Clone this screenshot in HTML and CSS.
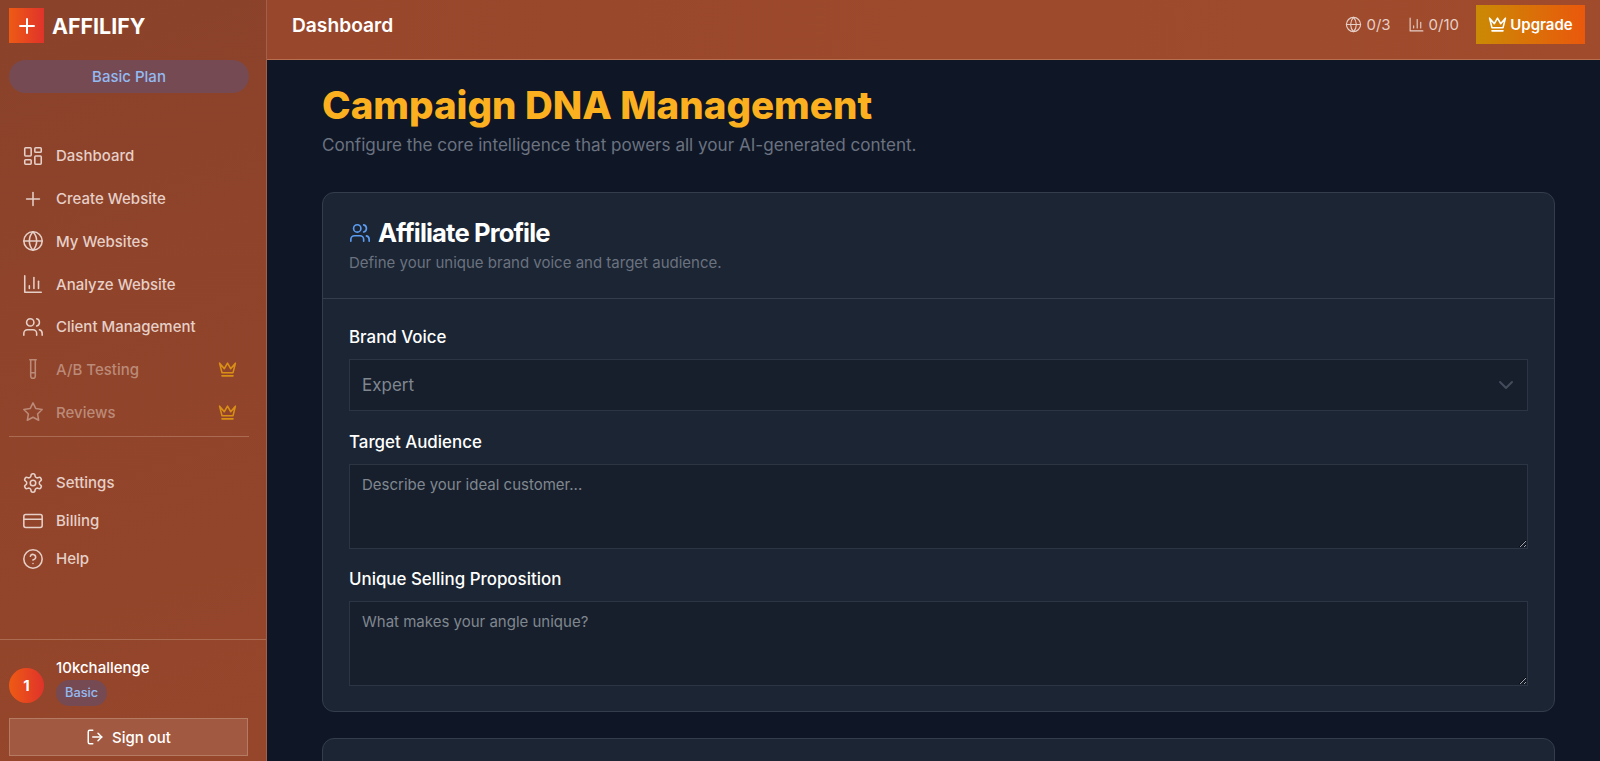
FILE: index.html
```html
<!DOCTYPE html>
<html lang="en">
<head>
    <meta charset="UTF-8">
    <meta name="viewport" content="width=device-width, initial-scale=1.0">
    <title>Affilify - Campaign DNA</title>
    <link rel="stylesheet" href="styles.css">
</head>
<body>
    <svg class="icon-defs" aria-hidden="true">
        <symbol id="i-dashboard" viewBox="0 0 24 24"><rect x="3" y="3" width="7" height="9" rx="1"/><rect x="14" y="3" width="7" height="5" rx="1"/><rect x="14" y="12" width="7" height="9" rx="1"/><rect x="3" y="16" width="7" height="5" rx="1"/></symbol>
        <symbol id="i-plus" viewBox="0 0 24 24"><path d="M5 12h14"/><path d="M12 5v14"/></symbol>
        <symbol id="i-globe" viewBox="0 0 24 24"><circle cx="12" cy="12" r="10"/><path d="M12 2a14.5 14.5 0 0 0 0 20 14.5 14.5 0 0 0 0-20"/><path d="M2 12h20"/></symbol>
        <symbol id="i-chart" viewBox="0 0 24 24"><path d="M3 3v18h18"/><path d="M18 17V9"/><path d="M13 17V5"/><path d="M8 17v-3"/></symbol>
        <symbol id="i-users" viewBox="0 0 24 24"><path d="M16 21v-2a4 4 0 0 0-4-4H6a4 4 0 0 0-4 4v2"/><circle cx="9" cy="7" r="4"/><path d="M22 21v-2a4 4 0 0 0-3-3.87"/><path d="M16 3.13a4 4 0 0 1 0 7.75"/></symbol>
        <symbol id="i-tube" viewBox="0 0 24 24"><path d="M14.5 2v17.5c0 1.4-1.1 2.5-2.5 2.5s-2.5-1.1-2.5-2.5V2"/><path d="M8.5 2h7"/><path d="M14.5 16h-5"/></symbol>
        <symbol id="i-star" viewBox="0 0 24 24"><polygon points="12 2 15.09 8.26 22 9.27 17 14.14 18.18 21.02 12 17.77 5.82 21.02 7 14.14 2 9.27 8.91 8.26 12 2"/></symbol>
        <symbol id="i-crown" viewBox="0 0 24 24"><path d="m2 4 3 12h14l3-12-6 7-4-7-4 7-6-7z"/><path d="M5 20h14"/></symbol>
        <symbol id="i-settings" viewBox="0 0 24 24"><path d="M12.22 2h-.44a2 2 0 0 0-2 2v.18a2 2 0 0 1-1 1.73l-.43.25a2 2 0 0 1-2 0l-.15-.08a2 2 0 0 0-2.73.73l-.22.38a2 2 0 0 0 .73 2.73l.15.1a2 2 0 0 1 1 1.72v.51a2 2 0 0 1-1 1.74l-.15.09a2 2 0 0 0-.73 2.73l.22.38a2 2 0 0 0 2.73.73l.15-.08a2 2 0 0 1 2 0l.43.25a2 2 0 0 1 1 1.73V20a2 2 0 0 0 2 2h.44a2 2 0 0 0 2-2v-.18a2 2 0 0 1 1-1.73l.43-.25a2 2 0 0 1 2 0l.15.08a2 2 0 0 0 2.73-.73l.22-.39a2 2 0 0 0-.73-2.73l-.15-.08a2 2 0 0 1-1-1.74v-.5a2 2 0 0 1 1-1.74l.15-.09a2 2 0 0 0 .73-2.73l-.22-.38a2 2 0 0 0-2.73-.73l-.15.08a2 2 0 0 1-2 0l-.43-.25a2 2 0 0 1-1-1.73V4a2 2 0 0 0-2-2z"/><circle cx="12" cy="12" r="3"/></symbol>
        <symbol id="i-card" viewBox="0 0 24 24"><rect x="2" y="5" width="20" height="14" rx="2"/><path d="M2 10h20"/></symbol>
        <symbol id="i-help" viewBox="0 0 24 24"><circle cx="12" cy="12" r="10"/><path d="M9.09 9a3 3 0 0 1 5.83 1c0 2-3 3-3 3"/><path d="M12 17h.01"/></symbol>
        <symbol id="i-logout" viewBox="0 0 24 24"><path d="M9 21H5a2 2 0 0 1-2-2V5a2 2 0 0 1 2-2h4"/><path d="m16 17 5-5-5-5"/><path d="M21 12H9"/></symbol>
        <symbol id="i-chevron" viewBox="0 0 24 24"><path d="m6 9 6 6 6-6"/></symbol>
    </svg>

    <aside class="sidebar">
        <div class="brand">
            <div class="brand-logo"><svg class="icon"><use href="#i-plus"/></svg></div>
            <span class="brand-name">AFFILIFY</span>
        </div>
        <div class="plan-pill">Basic Plan</div>

        <nav class="nav-main">
            <a class="nav-item"><svg class="icon"><use href="#i-dashboard"/></svg>Dashboard</a>
            <a class="nav-item"><svg class="icon"><use href="#i-plus"/></svg>Create Website</a>
            <a class="nav-item"><svg class="icon"><use href="#i-globe"/></svg>My Websites</a>
            <a class="nav-item"><svg class="icon"><use href="#i-chart"/></svg>Analyze Website</a>
            <a class="nav-item"><svg class="icon"><use href="#i-users"/></svg>Client Management</a>
            <a class="nav-item locked"><svg class="icon"><use href="#i-tube"/></svg>A/B Testing<svg class="icon crown"><use href="#i-crown"/></svg></a>
            <a class="nav-item locked"><svg class="icon"><use href="#i-star"/></svg>Reviews<svg class="icon crown"><use href="#i-crown"/></svg></a>
        </nav>

        <nav class="nav-secondary">
            <a class="nav-item"><svg class="icon"><use href="#i-settings"/></svg>Settings</a>
            <a class="nav-item"><svg class="icon"><use href="#i-card"/></svg>Billing</a>
            <a class="nav-item"><svg class="icon"><use href="#i-help"/></svg>Help</a>
        </nav>

        <div class="user-box">
            <div class="user-row">
                <div class="avatar">1</div>
                <div class="user-info">
                    <div class="user-name">10kchallenge</div>
                    <span class="user-badge">Basic</span>
                </div>
            </div>
            <button class="signout"><svg class="icon"><use href="#i-logout"/></svg>Sign out</button>
        </div>
    </aside>

    <div class="page">
        <header class="topbar">
            <div class="topbar-title">Dashboard</div>
            <div class="topbar-right">
                <span class="stat"><svg class="icon"><use href="#i-globe"/></svg>0/3</span>
                <span class="stat"><svg class="icon"><use href="#i-chart"/></svg>0/10</span>
                <button class="upgrade"><svg class="icon"><use href="#i-crown"/></svg>Upgrade</button>
            </div>
        </header>

        <main class="content">
            <h1>Campaign DNA Management</h1>
            <p class="lead">Configure the core intelligence that powers all your AI-generated content.</p>

            <section class="card">
                <div class="card-head">
                    <h2><svg class="icon"><use href="#i-users"/></svg>Affiliate Profile</h2>
                    <p>Define your unique brand voice and target audience.</p>
                </div>
                <div class="card-body">
                    <label class="field-label">Brand Voice</label>
                    <div class="select-wrap">
                        <select class="field field-select"><option>Expert</option></select>
                        <svg class="icon chevron"><use href="#i-chevron"/></svg>
                    </div>
                    <label class="field-label">Target Audience</label>
                    <textarea class="field field-area" placeholder="Describe your ideal customer..."></textarea>
                    <label class="field-label">Unique Selling Proposition</label>
                    <textarea class="field field-area" placeholder="What makes your angle unique?"></textarea>
                </div>
            </section>

            <section class="card card-next"></section>
        </main>
    </div>
</body>
</html>
```

FILE: styles.css
```css
* {
    box-sizing: border-box;
}

html, body {
    height: 100%;
}

body {
    display: flex;
    margin: 0;
    overflow: hidden;
    background-color: #0f1726;
    font-family: Inter, "Liberation Sans", sans-serif;
    color: #fff;
}

.icon-defs {
    display: none;
}

.icon {
    width: 24px;
    height: 24px;
    flex-shrink: 0;
    fill: none;
    stroke: currentColor;
    stroke-width: 2;
    stroke-linecap: round;
    stroke-linejoin: round;
}

/* sidebar */
.sidebar {
    display: flex;
    flex-direction: column;
    width: 267px;
    height: 761px;
    flex-shrink: 0;
    background: linear-gradient(160deg, #8a422a 0%, #96462b 100%);
    border-right: 1px solid #a2604a;
}

.brand {
    display: flex;
    align-items: center;
    gap: 8px;
    height: 35px;
    margin: 8px 9px 0;
}

.brand-logo {
    display: flex;
    align-items: center;
    justify-content: center;
    width: 35px;
    height: 35px;
    background: linear-gradient(90deg, #ee5a14, #e0332b);
}

.brand-name {
    font-size: 21.4px;
    font-weight: 700;
}

.plan-pill {
    height: 33px;
    margin: 17px 17px 0 9px;
    border-radius: 17px;
    background-color: #764a52;
    color: #93bbf3;
    font-size: 15px;
    font-weight: 500;
    line-height: 33px;
    text-align: center;
}

.nav-main {
    margin: 41.6px 17px 0 9px;
    padding-bottom: 2.5px;
    border-bottom: 1px solid #ab6a52;
}

.nav-item {
    display: flex;
    align-items: center;
    gap: 12px;
    height: 42.7px;
    padding-left: 13px;
    color: #e6cfc7;
    font-size: 15px;
    font-weight: 550;
}

.nav-item .icon {
    width: 22px;
    height: 22px;
    stroke-width: 1.7;
}

.nav-item.locked {
    color: #bb8a78;
}

.nav-item .crown {
    width: 19px;
    height: 19px;
    margin-left: auto;
    margin-right: 12px;
    color: #d98f16;
    stroke-width: 2;
}

.nav-secondary {
    margin: 27px 17px 0 9px;
}

.nav-secondary .nav-item {
    height: 38px;
}

.user-box {
    margin-top: auto;
    padding: 24px 18px 5px 9px;
    border-top: 1px solid #ab6a52;
}

.user-row {
    display: flex;
    align-items: center;
    gap: 12px;
}

.avatar {
    display: flex;
    align-items: center;
    justify-content: center;
    width: 35px;
    height: 35px;
    border-radius: 50%;
    background: linear-gradient(90deg, #ee5a14, #e0332b);
    font-size: 15px;
    font-weight: 700;
}

.user-info {
    margin-top: -6px;
}

.user-name {
    font-size: 15px;
    font-weight: 500;
    line-height: 20px;
}

.user-badge {
    display: inline-block;
    height: 26px;
    margin-top: 2px;
    padding: 0 9px;
    border-radius: 13px;
    background-color: #764a52;
    color: #93bbf3;
    font-size: 12.8px;
    font-weight: 500;
    line-height: 26px;
}

.signout {
    display: flex;
    align-items: center;
    justify-content: center;
    gap: 8px;
    width: 239px;
    height: 38px;
    margin-top: 12px;
    border: 1px solid #b67b63;
    background-color: #a15a41;
    color: #fff;
    font-family: inherit;
    font-size: 15px;
    font-weight: 550;
}

.signout .icon {
    width: 18px;
    height: 18px;
}

/* top bar */
.page {
    flex: 1;
    min-width: 0;
    height: 761px;
}

.topbar {
    display: flex;
    align-items: center;
    justify-content: space-between;
    height: 60px;
    padding: 0 15px 10px 25px;
    background: linear-gradient(100deg, #98472c 0%, #a04b2c 100%);
    border-bottom: 1px solid #b86f50;
}

.topbar-title {
    font-size: 19.2px;
    font-weight: 600;
}

.topbar-right {
    display: flex;
    align-items: center;
}

.stat {
    display: flex;
    align-items: center;
    gap: 4px;
    margin-right: 17px;
    color: #e6cfc7;
    font-size: 15px;
}

.stat .icon {
    width: 17px;
    height: 17px;
    stroke-width: 1.6;
}

.upgrade {
    display: flex;
    align-items: center;
    justify-content: center;
    gap: 3px;
    width: 109px;
    height: 39px;
    border: none;
    background: linear-gradient(90deg, #ca8a04, #ea580c);
    color: #fff;
    font-family: inherit;
    font-size: 15px;
    font-weight: 600;
}

.upgrade .icon {
    width: 19px;
    height: 19px;
}

/* main content */
.content {
    padding: 22px 45px 0 55px;
}

h1 {
    margin: 0;
    color: #fbb01f;
    font-size: 38.5px;
    font-weight: 800;
    line-height: 46px;
}

.lead {
    margin: 5px 0 0;
    color: #6b7280;
    font-size: 17.1px;
    line-height: 24px;
}

.card {
    margin-top: 35px;
    background-color: #1b2533;
    border: 1px solid #333d4c;
    border-radius: 12px;
}

.card-next {
    height: 60px;
    margin-top: 26px;
}

.card-head {
    height: 106px;
    padding: 24px 26px 0;
    border-bottom: 1px solid #333d4c;
}

.card-head h2 {
    display: flex;
    align-items: center;
    gap: 7px;
    margin: 0;
    font-size: 25.6px;
    font-weight: 700;
    letter-spacing: -0.85px;
    line-height: 32px;
}

.card-head h2 .icon {
    width: 22px;
    height: 22px;
    color: #5b9cf2;
    stroke-width: 1.8;
}

.card-head p {
    margin: 4px 0 0;
    color: #6b7280;
    font-size: 15px;
    line-height: 20px;
}

.card-body {
    padding: 27px 26px 25px;
}

.field-label {
    display: block;
    font-size: 16.9px;
    font-weight: 550;
    line-height: 22px;
}

.field {
    display: block;
    width: 100%;
    border: 1px solid #2b3543;
    border-radius: 0;
    background-color: #171f2d;
    color: #80878f;
    font-family: inherit;
    font-size: 17px;
    outline: none;
}

.select-wrap {
    position: relative;
    margin: 11px 0 20px;
}

.field-select {
    height: 52px;
    padding: 0 12px;
    appearance: none;
}

.chevron {
    position: absolute;
    top: 14px;
    right: 10px;
    color: #434c5a;
}

.field-area {
    height: 85px;
    margin: 10.5px 0 19.5px;
    padding: 10px 12px;
    font-size: 15px;
}

.field-area:last-child {
    margin-bottom: 0;
}

.field-area::placeholder {
    color: #80878f;
    opacity: 1;
}
```
